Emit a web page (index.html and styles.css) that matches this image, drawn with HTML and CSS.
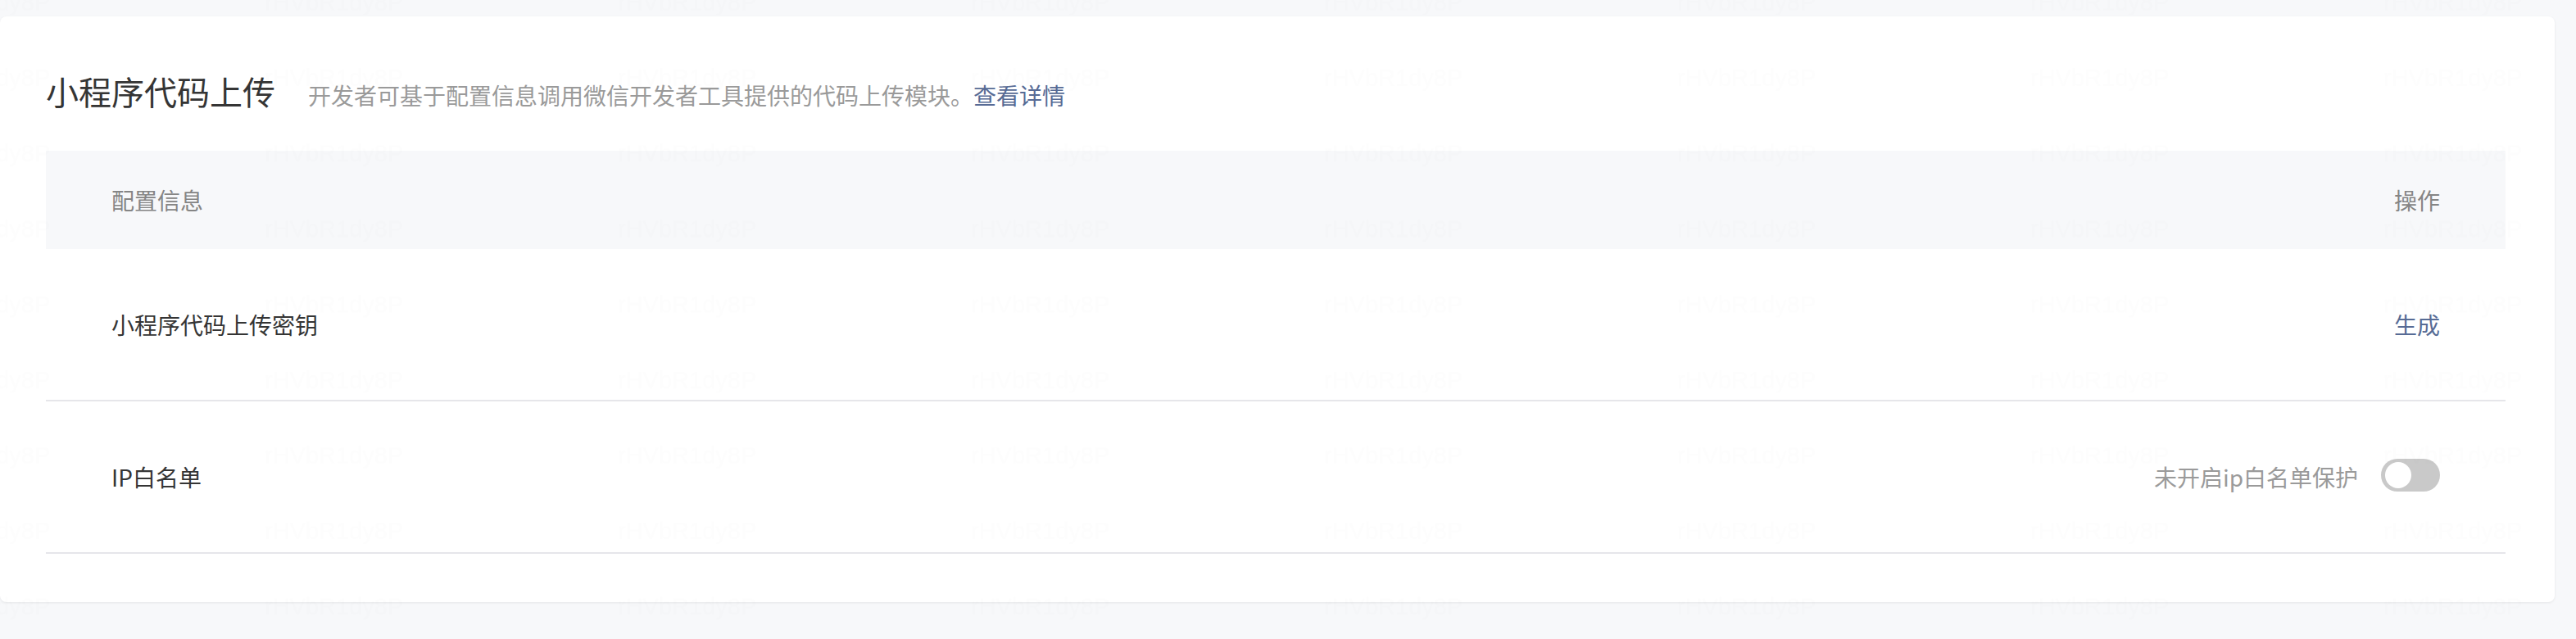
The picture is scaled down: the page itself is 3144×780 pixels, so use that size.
FILE: index.html
```html
<!DOCTYPE html>
<html lang="zh-CN">
<head>
<meta charset="utf-8">
<title>小程序代码上传</title>
<link rel="stylesheet" href="styles.css">
</head>
<body>
<div class="page">
  <section class="card">
    <div class="card-head">
      <h2 class="title">小程序代码上传</h2>
      <p class="desc">开发者可基于配置信息调用微信开发者工具提供的代码上传模块。<a class="link" href="#">查看详情</a></p>
    </div>
    <div class="table">
      <div class="thead">
        <span class="th">配置信息</span>
        <span class="th">操作</span>
      </div>
      <div class="row">
        <span class="cell">小程序代码上传密钥</span>
        <a class="link action" href="#">生成</a>
      </div>
      <div class="row">
        <span class="cell">IP白名单</span>
        <div class="switch-wrap">
          <span class="switch-label">未开启ip白名单保护</span>
          <span class="switch"><span class="knob"></span></span>
        </div>
      </div>
    </div>
  </section>
</div>
<svg class="watermark" width="3144" height="780" aria-hidden="true">
  <defs>
    <pattern id="wm" patternUnits="userSpaceOnUse" x="-108" y="-11" width="431" height="92.2">
      <text x="0" y="24" class="wm-text">rHVbR1dy8P</text>
    </pattern>
  </defs>
  <rect x="0" y="0" width="3144" height="780" fill="url(#wm)"></rect>
</svg>
</body>
</html>
```
FILE: styles.css
```css
html, body {
  margin: 0;
  padding: 0;
}
body {
  background: #f7f8fa;
  font-family: "Noto Sans CJK SC", "Noto Sans", sans-serif;
  width: 3144px;
  height: 780px;
  overflow: hidden;
  position: relative;
}
.page {
  padding-top: 20px;
}
.card {
  width: 3118px;
  height: 715px;
  box-sizing: border-box;
  padding: 63px 60px 0 56px;
  background: #fff;
  border-radius: 8px;
  box-shadow: 0 1px 3px rgba(0, 0, 0, 0.08);
}
.card-head {
  display: flex;
  align-items: baseline;
  height: 56px;
  margin-bottom: 45px;
}
.title {
  margin: 0;
  font-size: 40px;
  line-height: 56px;
  font-weight: 400;
  color: #353535;
}
.desc {
  margin: 0 0 0 40px;
  font-size: 28px;
  line-height: 40px;
  color: #9a9a9a;
}
.link {
  color: #576b95;
  text-decoration: none;
}
.thead {
  display: flex;
  justify-content: space-between;
  align-items: center;
  height: 120px;
  padding: 0 80px;
  background: #f7f8fa;
}
.th {
  font-size: 28px;
  line-height: 40px;
  color: #858585;
}
.row {
  display: flex;
  justify-content: space-between;
  align-items: center;
  height: 184px;
  padding: 0 80px;
  border-bottom: 2px solid #e6e6ea;
}
.cell {
  font-size: 28px;
  line-height: 40px;
  color: #353535;
}
.action {
  font-size: 28px;
  line-height: 40px;
}
.switch-wrap {
  display: flex;
  align-items: center;
}
.switch-label {
  font-size: 28px;
  line-height: 40px;
  color: #9a9a9a;
  margin-right: 28px;
}
.switch {
  position: relative;
  width: 72px;
  height: 40px;
  border-radius: 20px;
  background: #c9c9c9;
  margin-top: -4px;
}
.knob {
  position: absolute;
  left: 5px;
  top: 4px;
  width: 32px;
  height: 32px;
  border-radius: 50%;
  background: #fff;
}
.watermark {
  position: absolute;
  left: 0;
  top: 0;
  pointer-events: none;
}
.wm-text {
  font-family: "Liberation Sans", Arial, sans-serif;
  font-size: 29px;
  fill: rgba(0, 0, 0, 0.007);
}
```
